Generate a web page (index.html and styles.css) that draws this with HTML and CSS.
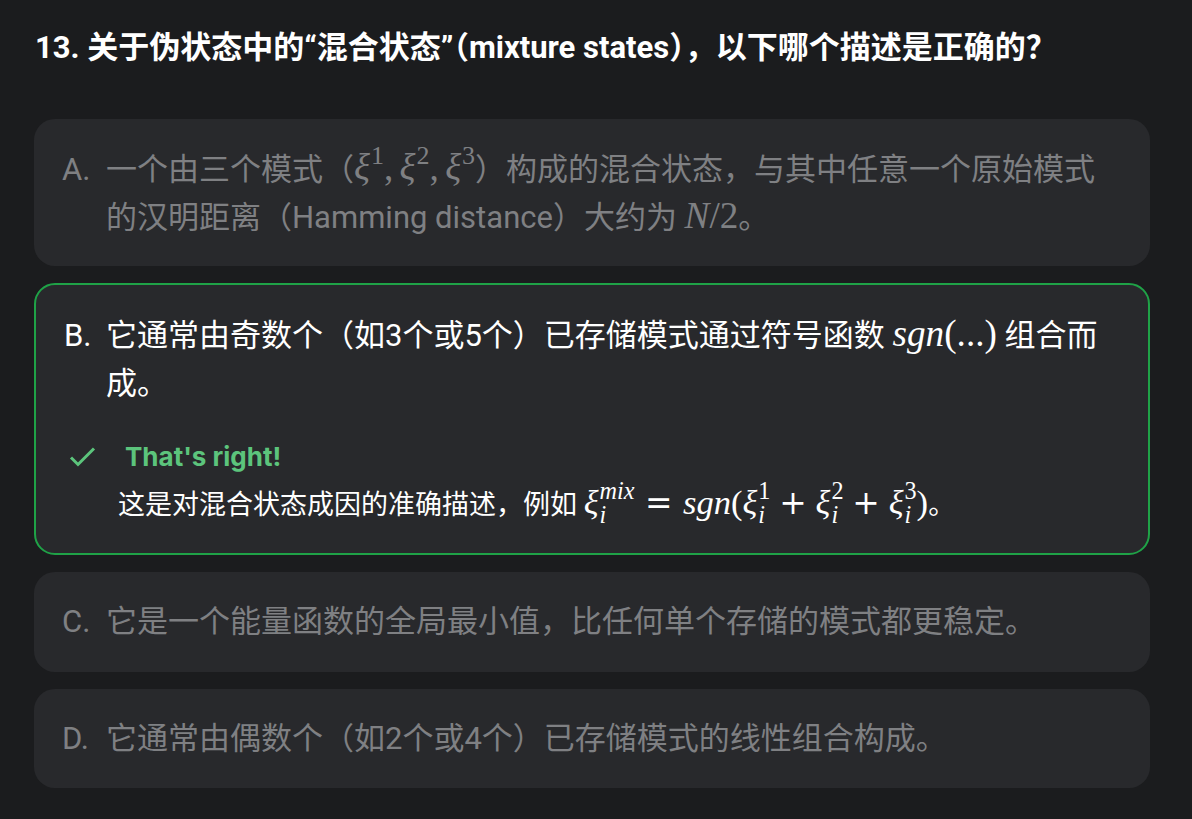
FILE: index.html
```html
<!DOCTYPE html>
<html lang="zh-CN">
<head>
<meta charset="utf-8">
<link rel="stylesheet" href="styles.css">
</head>
<body>
<main class="quiz">
  <h1 class="question">13. 关于伪状态中的“混合状态”（mixture states），以下哪个描述是正确的？</h1>

  <div class="option dim first">
    <span class="label">A.</span>
    <div class="text">一个由三个模式（<span class="math"><i>ξ</i><sup>1</sup><span class="comma">,</span><i>ξ</i><sup>2</sup><span class="comma">,</span><i>ξ</i><sup>3</sup></span>）构成的混合状态，与其中任意一个原始模式的汉明距离（Hamming distance）大约为 <span class="math"><i>N</i>/2</span>。</div>
  </div>

  <div class="option correct">
    <span class="label">B.</span>
    <div class="body">
      <div class="text">它通常由奇数个（如3个或5个）已存储模式通过符号函数 <span class="math"><i>sgn</i>(...)</span> 组合而成。</div>
      <div class="feedback">
        <div class="fb-head">
          <svg class="check" viewBox="0 0 28 28" width="28" height="28"><path d="M3 14.5l7 7L26 5.5" fill="none" stroke="#5cc47c" stroke-width="3"/></svg>
          <span class="fb-title">That's right!</span>
        </div>
        <div class="fb-text">这是对混合状态成因的准确描述，例如 <span class="math"><i>ξ</i><span class="ss"><span class="sup"><i>mix</i></span><span class="sub"><i>i</i></span></span><span class="op rel">=</span><i>sgn</i>(<i>ξ</i><span class="ss"><span class="sup">1</span><span class="sub"><i>i</i></span></span><span class="op">+</span><i>ξ</i><span class="ss"><span class="sup">2</span><span class="sub"><i>i</i></span></span><span class="op">+</span><i>ξ</i><span class="ss"><span class="sup">3</span><span class="sub"><i>i</i></span></span>)</span>。</div>
      </div>
    </div>
  </div>

  <div class="option dim">
    <span class="label">C.</span>
    <div class="text">它是一个能量函数的全局最小值，比任何单个存储的模式都更稳定。</div>
  </div>

  <div class="option dim">
    <span class="label">D.</span>
    <div class="text">它通常由偶数个（如2个或4个）已存储模式的线性组合构成。</div>
  </div>
</main>
</body>
</html>
```

FILE: styles.css
```css
html, body {
  margin: 0;
  padding: 0;
  background: #1b1c1e;
}

body {
  font-family: Roboto, "Noto Sans CJK SC", sans-serif;
  color: #ffffff;
}

.quiz {
  width: 1116px;
  padding: 27px 0 0 34px;
  display: flex;
  flex-direction: column;
  gap: 17px;
}

.question {
  margin: 0 0 33px 1px;
  font-size: 31px;
  line-height: 42px;
  font-weight: 700;
  color: #ffffff;
}

.option {
  display: flex;
  align-items: flex-start;
  background: #28292c;
  border-radius: 21px;
  padding: 26px 28px;
  font-size: 31px;
  line-height: 47.5px;
}

.option.dim {
  color: #7f8083;
}

.option.first {
  padding: 27px 28px 25px 28px;
}

.option.correct {
  border: 2px solid #1fa247;
  padding: 27px 26px 26px 28px;
  color: #ffffff;
}

.label {
  flex: 0 0 44px;
  width: 44px;
}

.option.correct .label {
  flex-basis: 42px;
  width: 42px;
}

.text, .body {
  flex: 1;
  min-width: 0;
}

.math {
  font-family: "Liberation Serif", "DejaVu Serif", serif;
  font-size: 1.2em;
  line-height: 0;
  white-space: nowrap;
}

.math i {
  font-style: italic;
}

.math sup {
  font-size: 0.7em;
  line-height: 0;
  vertical-align: 0.62em;
  margin-left: 1px;
}

.comma {
  margin-right: 0.17em;
}

.feedback {
  margin: 32px 0 0 -38px;
}

.fb-head {
  display: flex;
  align-items: center;
  gap: 29px;
  height: 36px;
}

.check {
  display: block;
}

.fb-title {
  font-family: Inter, Roboto, sans-serif;
  font-size: 26px;
  font-weight: 700;
  color: #5cc47c;
  line-height: 36px;
}

.fb-text {
  margin: 4px 0 0 50px;
  font-size: 27px;
  line-height: 40px;
}

.fb-text .math {
  font-size: 1.28em;
}

.ss {
  display: inline-block;
  vertical-align: -0.36em;
  line-height: 1;
  font-size: 0.7em;
  margin-left: 1px;
}

.ss > span {
  display: block;
  height: 1em;
}

.op {
  font-family: "DejaVu Serif", serif;
  font-style: normal;
  font-size: 0.95em;
  padding: 0 0.27em;
}

.op.rel {
  padding: 0 0.32em;
}
```
